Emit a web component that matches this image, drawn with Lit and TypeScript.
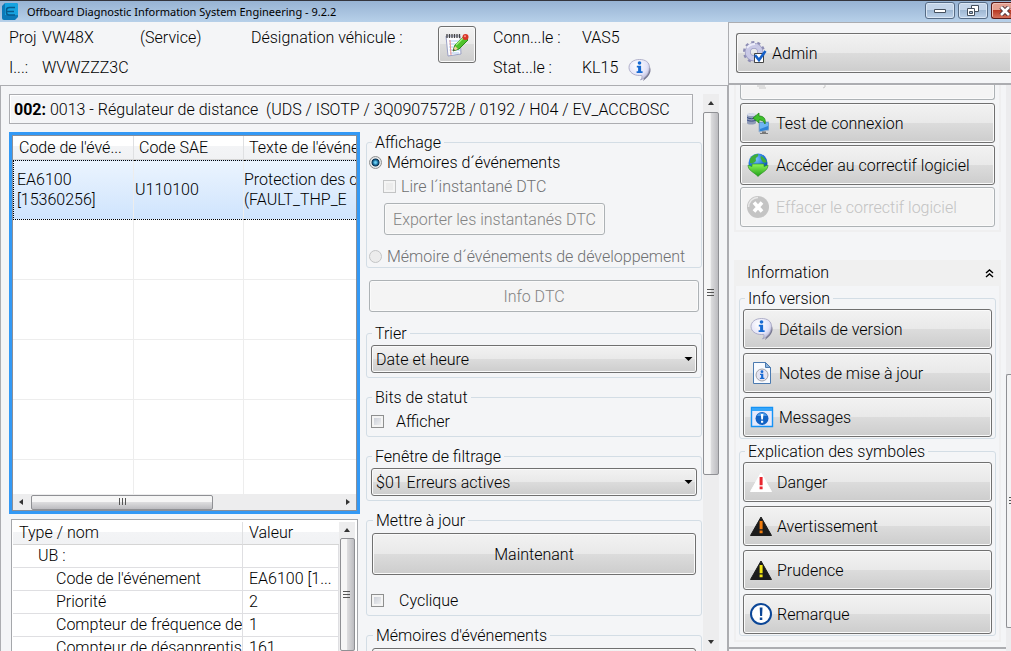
import { LitElement, html, css, svg } from "lit";
import { customElement } from "lit/decorators.js";

const infoBubble = (size = 24) => html`<svg class="icon" width=${size} height=${size} viewBox="0 0 24 24" aria-hidden="true">
  <defs>
    <radialGradient id="bub" cx=".4" cy=".3" r=".8"><stop offset="0" stop-color="#fff" /><stop offset=".6" stop-color="#e3e3f8" /><stop offset="1" stop-color="#a9a9c8" /></radialGradient>
  </defs>
  <path d="M22 9c2 6-2 10-7 14 1-2 1-3 0-5z" fill="#77778f" />
  <path d="M11.500 1.500C5.500 1.500 1 4.800 1 9.500S5.500 17.500 11.500 17.500c.8 0 1.500 0 2.200-.1.600 1.500.2 3-1.200 4.600 4.500-1.700 9-6 9-12.700 0-5-4-7.800-10-7.800z" fill="url(#bub)" stroke="#a0a0be" stroke-width=".8" />
  <circle cx="11.500" cy="5" r="1.800" fill="#1769d2" />
  <path d="M8.800 7.800h4.300v5.400h1.500V15H8.600v-1.800h1.500V9.500H8.800z" fill="#1769d2" />
</svg>`;

const notepad = html`<svg class="icon" width="24" height="24" viewBox="0 0 24 24" aria-hidden="true">
  <path d="M1 3l14 0 1 18-13 2z" fill="#fdfdff" stroke="#9aa0c4" />
  <path d="M4 8h11M4 11h11M4 14h11M4.500 17h11M5 20h9" stroke="#a9c9ee" />
  <path d="M5 7l1 15" stroke="#ee8c8c" />
  <path d="M2 1v4M4.500 1v4M7 1v4M9.500 1v4M12 1v4M14.500 1v4" stroke="#444" stroke-width="1.300" />
  <path d="M8 18l2-6 9-9 4 4-9 9z" fill="#4fc22b" stroke="#2b8a17" />
  <path d="M11 12l8-8" stroke="#a6f084" stroke-width="1.500" />
  <path d="M8 18l2-5 3 3z" fill="#f1cf9a" /><path d="M8 18l.7-2 1.300 1.300z" fill="#222" />
  <circle cx="20.500" cy="4" r="3" fill="#d93426" /><circle cx="20" cy="3.200" r="1" fill="#f39a8e" />
</svg>`;

const gear = html`<svg class="icon" width="24" height="24" viewBox="0 0 24 24" aria-hidden="true">
  <circle cx="11" cy="11" r="9.500" fill="none" stroke="#8d8db4" stroke-width="3" stroke-dasharray="3 2.970" />
  <circle cx="11" cy="11" r="6.200" fill="none" stroke="#9a9ac2" stroke-width="6" />
  <circle cx="11" cy="11" r="6.200" fill="none" stroke="#c9c9e6" stroke-width="4.600" />
  <path d="M4 7c2-3 5-4 8-4" stroke="#ececfa" stroke-width="2" fill="none" />
  <path d="M11.500 12.500h9v9h-9z" fill="#fff" stroke="#444" />
  <path d="M12 14l4 5 6.500-9" fill="none" stroke="#1660c8" stroke-width="2.600" />
</svg>`;

const connection = html`<svg class="icon" width="22" height="22" viewBox="0 0 22 22" aria-hidden="true">
  <path d="M0 3c0-2 8-2 9 0v8c-1 2-9 2-9 0z" fill="#8f9bb8" /><ellipse cx="4.500" cy="2.500" rx="4.500" ry="1.500" fill="#d5dbea" />
  <path d="M0 5.500c2 1.500 7 1.500 9 0M0 8c2 1.500 7 1.500 9 0" stroke="#3a4e86" fill="none" />
  <path d="M12 10h10v8l-10 2z" fill="#2f83d6" stroke="#9fb4cc" /><path d="M13 11h8v3l-8 3z" fill="#6db5f2" />
  <path d="M15 19.500h4V21h2v1h-8v-1h2z" fill="#777" />
  <path d="M6 6l6-5v3c5 0 7 3 6 8-1-3-3-4-6-4v3z" fill="#3fbf2c" stroke="#1f8716" stroke-width=".8" />
</svg>`;

const globe = html`<svg class="icon" width="22" height="24" viewBox="0 0 22 24" aria-hidden="true">
  <defs>
    <radialGradient id="glb" cx=".4" cy=".3" r=".75"><stop offset="0" stop-color="#7cc4fb" /><stop offset=".6" stop-color="#1d6fd8" /><stop offset="1" stop-color="#0b3f98" /></radialGradient>
    <linearGradient id="arw" x2="0" y2="1"><stop offset="0" stop-color="#8df557" /><stop offset="1" stop-color="#20a01a" /></linearGradient>
  </defs>
  <circle cx="11" cy="10" r="9.500" fill="url(#glb)" />
  <path d="M3 6c2-4 6-5 8-5 1 2-1 3-2 4s1 3-1 4-3 2-5 1zM14 3c3 1 5 4 6 6-2 1-4 1-5-1s-2-3-1-5z" fill="#3fae3a" />
  <path d="M1 12l4 1.500V11h12v2.500l4-1.500c0 6-6 7-10 11.500C7 19 1 18 1 12z" fill="url(#arw)" stroke="#238a1c" stroke-width=".6" />
</svg>`;

const crossDisc = html`<svg class="icon" width="24" height="24" viewBox="0 0 24 24" aria-hidden="true">
  <circle cx="12" cy="12" r="11" fill="#c4c4c4" /><path d="M2.500 12A9.500 9.500 0 0 1 12 2.500" stroke="#e8e8e8" stroke-width="1.500" fill="none" />
  <path d="M8 7.500l8 9M16 7.500l-8 9" stroke="#fff" stroke-width="3.600" />
</svg>`;

const docInfo = html`<svg class="icon" width="24" height="24" viewBox="0 0 24 24" aria-hidden="true">
  <path d="M3.500 1.500h12l5 5v16h-17z" fill="#f7faff" stroke="#4b7ab0" /><path d="M15.500 1.500v5h5z" fill="#8cb4dd" stroke="#4b7ab0" />
  <circle cx="12" cy="14" r="6" fill="#e4e4f2" stroke="#a4a4a8" />
  <circle cx="12" cy="10.700" r="1.400" fill="#1769d2" /><path d="M10 12.700h3.300v4h1.100V18H9.900v-1.300h1.200V14H10z" fill="#1769d2" />
</svg>`;

const windowInfo = html`<svg class="icon" width="24" height="24" viewBox="0 0 24 24" aria-hidden="true">
  <path d="M1.500 2.500h21v19h-21z" fill="#e6e9fb" stroke="#1592f5" stroke-width="1.400" /><path d="M2 3h20v3H2z" fill="#35a6fa" />
  <circle cx="12" cy="13.500" r="6.500" fill="#1262c4" /><path d="M7 11a5.500 5.500 0 0 1 10 0z" fill="#4a98e8" />
  <path d="M10.800 9h2.600l-.5 5.500h-1.600zM11 15.800h2.200v2H11z" fill="#fff" />
</svg>`;

const triangle = (body: string, mark: string) => html`<svg class="icon" width="22" height="20" viewBox="0 0 22 20" aria-hidden="true">
  <path d="M11 1L21.500 19.500H.5z" fill=${body} stroke=${body} stroke-linejoin="round" />
  <path d="M9.600 5h3v8.200h-3zM9.600 14.500h3v2.800h-3z" fill=${mark} />
</svg>`;

const remark = html`<svg class="icon" width="22" height="22" viewBox="0 0 22 22" aria-hidden="true">
  <circle cx="11" cy="11" r="10" fill="#fff" stroke="#0b4697" stroke-width="2" />
  <path d="M9.700 4.500h2.800l-.4 8.500h-2zM9.800 14.500h2.500V17H9.800z" fill="#0b4697" />
</svg>`;

const arrowPaths: Record<string, string> = {
  up: "M1 6l3-4 3 4z",
  down: "M1 2h6l-3 4z",
  left: "M6 1v6l-4-3z",
  right: "M2 1v6l4-3z",
};
const arrow = (dir: string) =>
  html`<svg class="arrow" width="8" height="8" viewBox="0 0 8 8" aria-hidden="true">${svg`<path d=${arrowPaths[dir]} fill="#333"/>`}</svg>`;
const grip = html`<svg width="8" height="8" viewBox="0 0 8 8" aria-hidden="true"><path d="M0 .5h7M0 3.500h7M0 6.500h7" stroke="#555" /></svg>`;

const sections = {
  version: [
    { icon: infoBubble(), label: "Détails de version" },
    { icon: docInfo, label: "Notes de mise à jour" },
    { icon: windowInfo, label: "Messages" },
  ],
  symbols: [
    { icon: triangle("#fff", "#e8262f"), label: "Danger" },
    { icon: triangle("#1c1c1c", "#f07d10"), label: "Avertissement" },
    { icon: triangle("#1c1c1c", "#f4e616"), label: "Prudence" },
    { icon: remark, label: "Remarque" },
  ],
};

const details = [
  ["Code de l'événement", "EA6100 [1..."],
  ["Priorité", "2"],
  ["Compteur de fréquence de", "1"],
  ["Compteur de désapprentis", "161"],
];

@customElement("app-root")
export class AppRoot extends LitElement {
  static styles = css`
    :host {
      display: grid;
      grid-template-rows: 22px minmax(0, 1fr);
      height: 100vh;
      overflow: hidden;
      background: #f4f5f7;
      color: #000;
      font: 300 16px/20px Roboto, "Liberation Sans", sans-serif;
    }
    * { box-sizing: border-box; }
    button, select, input { font: inherit; color: inherit; margin: 0; }
    svg { display: block; flex: none; }

    .titlebar {
      display: flex;
      align-items: center;
      gap: 8px;
      padding-left: 2px;
      border-top: 1px solid #34353c;
      background: linear-gradient(#97b3d3, #b7d0e9);
      font: 400 11px/20px "Noto Sans", "Open Sans", sans-serif;
    }
    .title { flex: 1; font: inherit; margin: 0; }
    .winbtns { display: flex; gap: 3px; align-self: flex-start; padding-top: 1px; overflow: hidden; }
    .winbtn {
      display: grid; place-items: center;
      width: 30px; height: 17px; padding: 0;
      border: 1px solid #566b85; border-radius: 3px;
      background: linear-gradient(#c3d4e8 50%, #9fb8d3 50%, #bdd2ea);
      box-shadow: inset 0 0 0 1px #d9e6f4;
    }
    .close {
      width: 20px; padding-left: 6px; border-radius: 3px 0 0 3px; border-right: 0; border-color: #5b1a17;
      background: linear-gradient(#e3a091 50%, #b93a24 50%, #d4705a);
      box-shadow: inset 1px 1px 0 #efc0b6;
      overflow: hidden;
    }

    .workspace { display: grid; grid-template-columns: minmax(0, 1fr) 283px; min-height: 0; }
    .main, .side { display: grid; grid-template-rows: 63px minmax(0, 1fr); min-height: 0; }

    .vehicle {
      display: grid;
      grid-template-columns: 33px 98px 111px 187px 55px 89px 46px 1fr;
      grid-template-rows: 20px 20px;
      row-gap: 10px;
      padding: 6px 0 0 9px;
      white-space: nowrap;
    }
    .note {
      grid-row: 1 / 3;
      grid-column: 5;
      display: grid; place-items: center;
      width: 38px; height: 37px; padding: 0; margin-top: -2px;
    }
    .r1 { grid-row: 1; }
    .r2 { grid-row: 2; }
    .c1 { grid-column: 1; }
    .c2 { grid-column: 2; }
    .c6 { grid-column: 6; }
    .c7 { grid-column: 7; }
    .c8 { grid-column: 8; }

    .diag {
      display: grid;
      grid-template-columns: minmax(0, 1fr) 16px;
      column-gap: 1px;
      padding: 8px 9px 0 8px;
      border: solid #acadb1;
      border-width: 1px 0 0 1px;
      min-height: 0;
    }
    .work { display: grid; grid-template-rows: 30px minmax(0, 1fr); row-gap: 8px; min-height: 0; }
    .ecu {
      margin-right: 9px; padding: 0 4px;
      border: 1px solid #acadb1;
      box-shadow: inset 1px 1px 0 #fff;
      line-height: 29px;
      white-space: nowrap; overflow: hidden;
    }
    .ecu b { font-weight: 700; }
    .columns { display: grid; grid-template-columns: minmax(0, 351fr) minmax(0, 336fr); column-gap: 6px; min-height: 0; }
    .lists { display: grid; grid-template-rows: minmax(0, 1fr) 132px; row-gap: 5px; min-height: 0; }

    .events {
      display: grid; grid-template-rows: minmax(0, 1fr) 16px;
      border: 3px solid #3399f5;
      background: #fff;
      box-shadow: inset 0 0 0 1px #8a8f99;
      padding: 1px;
      min-height: 0;
    }
    .clip { overflow: hidden; min-width: 0; }
    table { border-collapse: separate; border-spacing: 0; table-layout: fixed; width: 100%; }
    th, td { font-weight: 300; text-align: left; white-space: nowrap; overflow: hidden; padding: 0; }
    th { background: linear-gradient(#fff 45%, #f3f4f6 45%, #f1f2f4); border-bottom: 1px solid #d5d5d5; border-right: 1px solid #dfe0e2; padding-left: 6px; }
    th:last-child { border-right: 0; }
    .ev th { height: 24px; padding-left: 5px; }
    .ev th:first-child { padding-left: 6px; }
    .ev td { height: 60px; border-bottom: 1px solid #ededed; border-right: 1px solid #ededed; padding-left: 1px; }
    .ev td:first-child { padding-left: 4px; }
    .ev td:last-child { border-right: 0; padding-left: 0; }
    .ev .sel td {
      background: linear-gradient(#ebf4fe, #cfe4fd);
      border-top: 1px dotted #000; border-bottom: 1px dotted #000;
    }
    .ev .sel td:first-child { border-left: 1px dotted #000; padding-left: 3px; }
    .ca { width: 121px; }
    .cb { width: 110px; }

    .props {
      display: grid; grid-template-columns: minmax(0, 1fr) 16px;
      margin: 0 2px; padding: 2px 2px 0 1px;
      border: 1px solid #a5a7ab; border-bottom: 0;
      background: #fff; overflow: hidden;
    }
    .pr th { height: 23px; }
    .pr td { height: 23px; line-height: 22px; border-bottom: 1px solid #dfdfe2; border-right: 1px solid #dfdfe2; padding-left: 6px; }
    .pr .in1 { padding-left: 25px; }
    .pr .in2 { padding-left: 43px; }
    .cv { width: 96px; }

    .vbar, .hbar { display: flex; align-items: center; background: #ededee; }
    .vbar { flex-direction: column; }
    .arrow { margin: 4px; }
    .vthumb, .hthumb { display: grid; place-items: center; border: 1px solid #8f9094; border-radius: 2px; }
    .vthumb { width: 15px; background: linear-gradient(90deg, #f6f6f6 45%, #dcdcde 50%, #bcbcc0); }
    .hthumb { height: 15px; background: linear-gradient(#f6f6f6 45%, #dcdcde 50%, #bcbcc0); }
    .hthumb svg { transform: rotate(90deg); }
    .grow { flex: 1; }
    .hbar .hthumb { width: 53%; margin-left: 2px; }
    .mainbar .arrow { margin: 5px 4px; }
    .mainbar .vthumb { flex: 362; width: 16px; }
    .mainbar .grow { flex: 159; }

    .options { display: flex; flex-direction: column; min-height: 0; overflow: hidden; }
    fieldset { margin: 0; padding: 0 4px 4px; border: 1px solid #d3dde5; border-radius: 3px; min-width: 0; flex: none; }
    legend { padding: 1px 3px 0; margin-left: 1px; line-height: 20px; height: 20px; }
    .group { margin-top: 9px; }
    .show { padding: 0 2px 1px; }
    .show legend { margin-left: 3px; }
    .line { display: flex; align-items: center; height: 20px; gap: 5px; }
    .line span { padding-top: 2px; }
    .indent { padding-left: 14px; margin-top: 4px; }
    .bits { gap: 12px; margin-top: 4px; margin-bottom: 1px; }
    .cyc { gap: 15px; margin: 15px 0 1px; }
    .dim { color: #6f7072; }
    .btn, .pick {
      border: 1px solid #707070; border-radius: 3px;
      background: linear-gradient(#f2f2f2, #e9e9e9 49%, #dcdcdc 50%, #cdcdcd);
      box-shadow: inset 0 0 0 1px #fafafa;
    }
    .btn:disabled { border-color: #adb2b5; background: #f4f4f4; color: #838383; }
    .export { display: block; width: 221px; height: 32px; margin: 7px 0 11px 15px; padding: 1px 0 0; }
    .dtc { flex: none; height: 32px; margin: 12px 3px 2px; padding: 2px 0 0; }
    .now { display: block; width: 100%; height: 42px; margin-top: 3px; padding: 2px 0 0; }
    .upd { padding: 0 5px 4px; }
    .upd .cyc { margin-left: -1px; }
    .combo { display: grid; align-items: center; margin-top: 2px; }
    .pick { grid-area: 1 / 1; width: 100%; height: 28px; padding: 2px 4px 0; appearance: none; }
    .combo svg { grid-area: 1 / 1; justify-self: end; margin-right: 4px; pointer-events: none; }

    input { appearance: none; flex: none; width: 13px; height: 13px; }
    input[type="checkbox"] {
      border: 1px solid #8e8f8f;
      background: linear-gradient(135deg, #c3c8d2, #f6f6f6);
      box-shadow: inset 0 0 0 2px #f4f4f4;
    }
    input[type="radio"] { border: 1px solid #8e8f8f; border-radius: 50%; background: #f2f2f2; }
    input[type="radio"]:checked { background: radial-gradient(#6ad0f5 10%, #12608f 34%, #0b2f4c 46%, #e4e6e8 56%); }
    input[type]:disabled { border-color: #c3c4c5; background: #ececec; }

    .side { border-left: 1px solid #acadb1; }
    .account { padding: 10px 0 0 7px; border-top: 1px solid #acadb1; border-bottom: 2px solid #acadb1; }
    .tool {
      display: flex; align-items: center; gap: 5px;
      width: 100%; height: 40px; padding: 0 6px;
      text-align: left; white-space: nowrap;
    }
    .tool span { padding-top: 2px; }
    .admin { border-right: 0; border-radius: 3px 0 0 3px; }
    .panel { display: grid; grid-template-columns: minmax(0, 1fr) 5px; margin-left: -2px; border-left: 2px solid #acadb1; min-height: 0; }
    .scroll { display: flex; flex-direction: column; padding: 0 5px; overflow: hidden; border-bottom: 2px solid #acadb1; margin-bottom: 2px; }
    .tasks { display: flex; flex-direction: column; gap: 2px; padding: 0 4px 3px; border: 2px solid #efeff0; border-top: 0; }
    .tasks .tool { padding: 0 6px; gap: 7px; }
    .tasks .tool:disabled { color: #c3c3c3; padding-left: 5px; gap: 6px; }
    .tasks .cut { height: 15px; border-top: 0; border-radius: 0 0 3px 3px; margin-bottom: 1px; align-items: flex-start; }
    .heading {
      display: flex; align-items: center; justify-content: space-between;
      height: 26px; margin: 28px 0 0; padding: 0 7px 0 13px;
      background: #f0f0f0; font: inherit; flex: none;
    }
    .info { border: 2px solid #efeff0; border-top: 0; padding: 2px 3px 4px; }
    .info fieldset { padding: 0 3px 1px; }
    .info legend { margin-left: 2px; }
    .stack { display: flex; flex-direction: column; gap: 4px; margin-top: 1px; }
    .info .sym { margin-top: 2px; }
    .sidebar { display: grid; grid-template-rows: 289px 254px 1fr; background: #ececee; }
    .sidethumb { grid-row: 2; border: 1px solid #8f9094; border-right: 0; border-radius: 2px 0 0 2px; background: #f3f3f4; display: grid; align-items: center; justify-items: end; }
  `;

  private toolList(items: { icon: unknown; label: string }[]) {
    return html`<div class="stack">
      ${items.map((i) => html`<button class="btn tool">${i.icon}<span>${i.label}</span></button>`)}
    </div>`;
  }

  private combo(id: string, label: string, value: string) {
    return html`<div class="combo">
      <select class="pick" id=${id} aria-label=${label}><option>${value}</option></select>
      <svg width="9" height="6" viewBox="0 0 9 6" aria-hidden="true"><path d="M.5 1h8L4.500 5z" /></svg>
    </div>`;
  }

  render() {
    return html`
      <header class="titlebar">
        <svg width="17" height="17" viewBox="0 0 17 17" aria-hidden="true">
          <path d="M3 0h11q2 0 2 2v12l-3 3H2q-2 0-2-2V3z" fill="#0b79b8" /><path d="M3 0h11q2 0 2 2v10H3z" fill="#16a3e0" />
          <path d="M13 4.500H7.500Q4.500 4.500 4.500 7v2.500Q4.500 12 7 12H13M5 8.500h7" fill="none" stroke="#075a8c" stroke-width="1.500" />
        </svg>
        <h1 class="title">Offboard Diagnostic Information System Engineering - 9.2.2</h1>
        <div class="winbtns">
          <button class="winbtn" aria-label="Réduire"><svg width="12" height="6" viewBox="0 0 12 6"><path d="M.5 1.500h11v3H.5z" fill="#fff" stroke="#45505e" /></svg></button>
          <button class="winbtn" aria-label="Restaurer"><svg width="12" height="11" viewBox="0 0 12 11"><path d="M4.500.5h7v6h-7z" fill="#fff" stroke="#45505e" /><path d="M.5 3.500h7v7h-7z" fill="#fff" stroke="#45505e" /><path d="M2.500 6.500h3v2h-3z" fill="#9fb8d3" stroke="#45505e" /></svg></button>
          <button class="winbtn close" aria-label="Fermer"><svg width="12" height="10" viewBox="0 0 12 10"><path d="M2 1l8 8M10 1L2 9" stroke="#4c3036" stroke-width="4.500" /><path d="M2 1l8 8M10 1L2 9" stroke="#fff" stroke-width="2.600" /></svg></button>
        </div>
      </header>

      <div class="workspace">
        <main class="main">
          <div class="vehicle">
            <span class="r1 c1">Proj</span><span class="r1 c2">VW48X</span><span class="r1">(Service)</span><span class="r1">Désignation véhicule :</span>
            <button class="btn note" aria-label="Notes">${notepad}</button>
            <span class="r1 c6">Conn...le :</span><span class="r1 c7">VAS5</span>
            <span class="r2 c1">I...:</span><span class="r2 c2">WVWZZZ3C</span>
            <span class="r2 c6">Stat...le :</span><span class="r2 c7">KL15</span><span class="r2 c8">${infoBubble()}</span>
          </div>

          <div class="diag">
            <div class="work">
              <div class="ecu"><b>002:</b> 0013 - Régulateur de distance &nbsp;(UDS / ISOTP / 3Q0907572B / 0192 / H04 / EV_ACCBOSC</div>
              <div class="columns">
                <div class="lists">
                  <div class="events">
                    <div class="clip">
                      <table class="ev">
                        <colgroup><col class="ca" /><col class="cb" /><col /></colgroup>
                        <thead><tr><th>Code de l'évé...</th><th>Code SAE</th><th>Texte de l'événe</th></tr></thead>
                        <tbody>
                          <tr class="sel"><td>EA6100<br />[15360256]</td><td>U110100</td><td>Protection des c<br />(FAULT_THP_E</td></tr>
                          ${Array.from({ length: 5 }, () => html`<tr><td></td><td></td><td></td></tr>`)}
                        </tbody>
                      </table>
                    </div>
                    <div class="hbar">${arrow("left")}<div class="hthumb">${grip}</div><div class="grow"></div>${arrow("right")}</div>
                  </div>
                  <div class="props">
                    <div class="clip">
                      <table class="pr">
                        <colgroup><col /><col class="cv" /></colgroup>
                        <thead><tr><th>Type / nom</th><th>Valeur</th></tr></thead>
                        <tbody>
                          <tr><td class="in1">UB :</td><td></td></tr>
                          ${details.map(([k, v]) => html`<tr><td class="in2">${k}</td><td>${v}</td></tr>`)}
                        </tbody>
                      </table>
                    </div>
                    <div class="vbar">${arrow("up")}<div class="vthumb grow">${grip}</div></div>
                  </div>
                </div>

                <div class="options">
                  <fieldset class="show">
                    <legend>Affichage</legend>
                    <label class="line"><input type="radio" name="mem" checked /><span>Mémoires d´événements</span></label>
                    <label class="line indent dim"><input type="checkbox" disabled /><span>Lire l´instantané DTC</span></label>
                    <button class="btn export" disabled>Exporter les instantanés DTC</button>
                    <label class="line dim"><input type="radio" name="mem" disabled /><span>Mémoire d´événements de développement</span></label>
                  </fieldset>
                  <button class="btn dtc" disabled>Info DTC</button>
                  <fieldset class="group"><legend>Trier</legend>${this.combo("sort", "Trier", "Date et heure")}</fieldset>
                  <fieldset class="group"><legend>Bits de statut</legend>
                    <label class="line bits"><input type="checkbox" /><span>Afficher</span></label>
                  </fieldset>
                  <fieldset class="group"><legend>Fenêtre de filtrage</legend>${this.combo("filter", "Fenêtre de filtrage", "$01 Erreurs actives")}</fieldset>
                  <fieldset class="group upd"><legend>Mettre à jour</legend>
                    <button class="btn now">Maintenant</button>
                    <label class="line cyc"><input type="checkbox" /><span>Cyclique</span></label>
                  </fieldset>
                  <fieldset class="group upd"><legend>Mémoires d'événements</legend>
                    <button class="btn now" aria-label="Mémoires d'événements"></button>
                  </fieldset>
                </div>
              </div>
            </div>
            <div class="vbar mainbar">${arrow("up")}<div class="vthumb">${grip}</div><div class="grow"></div>${arrow("down")}</div>
          </div>
        </main>

        <aside class="side">
          <div class="account"><button class="btn tool admin">${gear}<span>Admin</span></button></div>
          <div class="panel">
            <div class="scroll">
              <div class="tasks">
                <button class="btn tool cut" disabled aria-hidden="true">
                  <svg width="80" height="5" viewBox="0 0 80 5"><path d="M11 1h8M13 3h7M79 0v2l-2 1" stroke="#c8c8c8" fill="none" /></svg>
                </button>
                <button class="btn tool">${connection}<span>Test de connexion</span></button>
                <button class="btn tool">${globe}<span>Accéder au correctif logiciel</span></button>
                <button class="btn tool" disabled>${crossDisc}<span>Effacer le correctif logiciel</span></button>
              </div>
              <h2 class="heading">Information
                <svg width="9" height="9" viewBox="0 0 9 9" aria-hidden="true"><path d="M1 4l3.500-3L8 4M1 8l3.500-3L8 8" fill="none" stroke="#000" stroke-width="1.400" /></svg>
              </h2>
              <div class="info">
                <fieldset><legend>Info version</legend>${this.toolList(sections.version)}</fieldset>
                <fieldset class="sym"><legend>Explication des symboles</legend>${this.toolList(sections.symbols)}</fieldset>
              </div>
            </div>
            <div class="sidebar"><div class="sidethumb"><svg width="2" height="8" viewBox="0 0 2 8"><path d="M0 .5h2M0 3.500h2M0 6.500h2" stroke="#555" /></svg></div></div>
          </div>
        </aside>
      </div>
    `;
  }
}
